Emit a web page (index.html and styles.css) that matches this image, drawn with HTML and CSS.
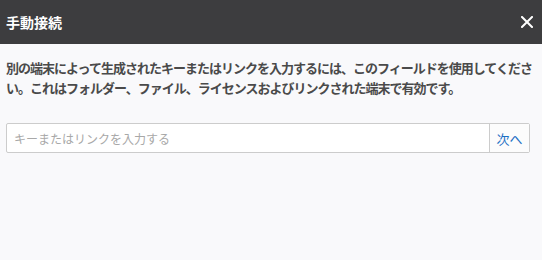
FILE: index.html
```html
<!DOCTYPE html>
<html lang="ja">
<head>
<meta charset="utf-8">
<link rel="stylesheet" href="styles.css">
</head>
<body>
<div class="dialog">
  <div class="header">
    <div class="title">手動接続</div>
    <div class="close" aria-label="閉じる">
      <svg width="12" height="12" viewBox="0 0 12 12"><path d="M1 1 L11 11 M11 1 L1 11" stroke="#ffffff" stroke-width="2" stroke-linecap="square" fill="none"/></svg>
    </div>
  </div>
  <div class="body">
    <p class="desc">別の端末によって生成されたキーまたはリンクを入力するには、このフィールドを使用してください。これはフォルダー、ファイル、ライセンスおよびリンクされた端末で有効です。</p>
    <div class="field">
      <input class="input" type="text" placeholder="キーまたはリンクを入力する">
      <button class="next">次へ</button>
    </div>
  </div>
</div>
</body>
</html>
```
FILE: styles.css
```css
html, body {
  margin: 0;
  padding: 0;
  background: #f9f9fb;
}
body {
  width: 542px;
  height: 260px;
  overflow: hidden;
  font-family: "Noto Sans CJK JP", "Noto Sans", sans-serif;
}
.dialog {
  display: flex;
  flex-direction: column;
}
.header {
  height: 44px;
  background: #3d3d3f;
  display: flex;
  align-items: center;
  justify-content: space-between;
  padding: 0 9px 0 6px;
}
.title {
  color: #ffffff;
  font-size: 14px;
  font-weight: 700;
  line-height: 20px;
}
.close {
  width: 12px;
  height: 12px;
  display: flex;
}
.body {
  padding: 14px 6px 0 6px;
}
.desc {
  margin: 0;
  font-size: 13px;
  letter-spacing: -1px;
  font-weight: 700;
  line-height: 20px;
  color: #4a4a4a;
}
.field {
  margin: 25px 6px 0 0;
  display: flex;
  height: 30px;
  border: 1px solid #cccccc;
  border-radius: 2px;
  background: #ffffff;
  box-sizing: border-box;
}
.input {
  flex: 1;
  border: none;
  outline: none;
  background: transparent;
  padding: 0 7px;
  font-family: "Noto Sans CJK JP", "Noto Sans", sans-serif;
  font-size: 12px;
  color: #444;
}
.input::placeholder {
  color: #a8a8a8;
}
.next {
  width: 40px;
  border: none;
  border-left: 1px solid #cccccc;
  background: #fcfcfc;
  color: #1c6fc4;
  font-family: "Noto Sans CJK JP", "Noto Sans", sans-serif;
  font-size: 13px;
  padding: 0;
  cursor: pointer;
}
```
